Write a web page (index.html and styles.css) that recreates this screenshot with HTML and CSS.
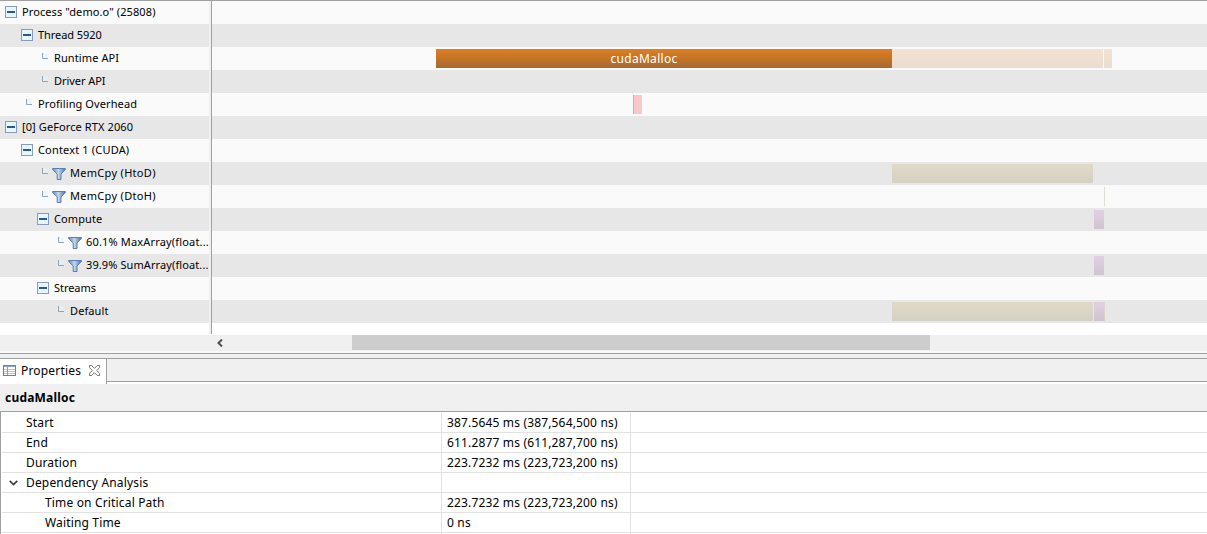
FILE: index.html
```html
<!DOCTYPE html>
<html lang="en">
<head>
<meta charset="utf-8">
<title>Profiler</title>
<link rel="stylesheet" href="styles.css">
</head>
<body>
<svg class="defs" aria-hidden="true">
  <defs>
    <linearGradient id="fg"><stop offset="0" stop-color="#5f89bd"/><stop offset=".45" stop-color="#c3d6ea"/><stop offset="1" stop-color="#4a70ac"/></linearGradient>
    <symbol id="minus" viewBox="0 0 12 12"><rect x=".5" y=".5" width="11" height="11" fill="#e6f6fd" stroke="#879cb8"/><path d="M2 6h8" stroke="#2f5597" stroke-width="2"/></symbol>
    <symbol id="elbow" viewBox="0 0 6 6"><path d="M1 0h5v5H1z" fill="#e6f4fa" opacity=".6"/><path d="M.5 0v5.5H6" fill="none" stroke="#8fa3ba"/></symbol>
    <symbol id="funnel" viewBox="0 0 14 12"><path d="M.6.5h12.8v1L9 6v5.5H5.2V6L.6 1.5z" fill="url(#fg)" stroke="#5b80b5"/></symbol>
  </defs>
</svg>
<main class="app">
  <section class="timeline">
    <div class="tree">
      <div class="item"><svg class="minus"><use href="#minus"/></svg><span>Process "demo.o" (25808)</span></div>
      <div class="item l1"><svg class="minus"><use href="#minus"/></svg><span class="tight">Thread 5920</span></div>
      <div class="item l2"><svg class="elbow"><use href="#elbow"/></svg><span>Runtime API</span></div>
      <div class="item l2"><svg class="elbow"><use href="#elbow"/></svg><span class="tight">Driver API</span></div>
      <div class="item l1"><svg class="elbow"><use href="#elbow"/></svg><span>Profiling Overhead</span></div>
      <div class="item"><svg class="minus"><use href="#minus"/></svg><span>[0] GeForce RTX 2060</span></div>
      <div class="item l1"><svg class="minus"><use href="#minus"/></svg><span class="loose">Context 1 (CUDA)</span></div>
      <div class="item l2"><svg class="elbow"><use href="#elbow"/></svg><svg class="funnel"><use href="#funnel"/></svg><span class="wide">MemCpy (HtoD)</span></div>
      <div class="item l2"><svg class="elbow"><use href="#elbow"/></svg><svg class="funnel"><use href="#funnel"/></svg><span class="wide">MemCpy (DtoH)</span></div>
      <div class="item l2"><svg class="minus"><use href="#minus"/></svg><span>Compute</span></div>
      <div class="item l3"><svg class="elbow"><use href="#elbow"/></svg><svg class="funnel"><use href="#funnel"/></svg><span class="loose">60.1% MaxArray(float...</span></div>
      <div class="item l3"><svg class="elbow"><use href="#elbow"/></svg><svg class="funnel"><use href="#funnel"/></svg><span>39.9% SumArray(float...</span></div>
      <div class="item l2"><svg class="minus"><use href="#minus"/></svg><span class="tight">Streams</span></div>
      <div class="item l3"><svg class="elbow"><use href="#elbow"/></svg><span>Default</span></div>
    </div>
    <div class="chart">
      <div class="lane"></div>
      <div class="lane"></div>
      <div class="lane"><i class="bar active" style="margin-left:224px;width:456px"><span>cudaMalloc</span></i><i class="bar api" style="width:211px"></i><i class="bar api" style="margin-left:1px;width:8px"></i></div>
      <div class="lane"></div>
      <div class="lane"><i class="bar overhead" style="margin-left:421px;width:9px"></i></div>
      <div class="lane"></div>
      <div class="lane"></div>
      <div class="lane"><i class="bar copy" style="margin-left:680px;width:201px"></i></div>
      <div class="lane"><i class="bar tick" style="margin-left:892px;width:1px"></i></div>
      <div class="lane"><i class="bar kernel" style="margin-left:882px;width:10px"></i></div>
      <div class="lane"></div>
      <div class="lane"><i class="bar kernel" style="margin-left:882px;width:10px"></i></div>
      <div class="lane"></div>
      <div class="lane"><i class="bar copy" style="margin-left:680px;width:201px"></i><i class="bar kernel" style="margin-left:1px;width:10px"></i><i class="bar copy" style="width:1px"></i></div>
    </div>
  </section>
  <div class="scrollbar">
    <svg class="arrow" viewBox="0 0 6 8"><path d="M5 .5L1.5 4 5 7.5" fill="none" stroke="#505050" stroke-width="2"/></svg>
    <div class="thumb"></div>
  </div>
  <div class="sash"></div>
  <div class="tabs">
    <div class="tab">
      <svg class="table-icon" viewBox="0 0 13 11"><rect x=".5" y=".5" width="12" height="10" fill="#fff" stroke="#6e80a5"/><path d="M1 1.5h11" stroke="#8fa4c8" /><path d="M1 4.5h11M1 6.5h11M1 8.5h11" stroke="#b4c1d6"/><path d="M4.5 2v8" stroke="#8e9fbd"/></svg>
      <span>Properties</span>
      <svg class="close" viewBox="0 0 11 11"><path d="M.5.5h2.2l2.8 2.8L8.3.5h2.2v2.2L7.7 5.5l2.8 2.8v2.2H8.3L5.5 7.7l-2.8 2.8H.5V8.3l2.8-2.8L.5 2.7z" fill="#fff" stroke="#666" stroke-width=".9"/></svg>
    </div>
    <div class="tab-rest"></div>
  </div>
  <h1 class="title"><span>cudaMalloc</span></h1>
  <div class="props">
    <div class="prop"><div class="name"><span>Start</span></div><div class="value"><span>387.5645 ms (387,564,500 ns)</span></div></div>
    <div class="prop"><div class="name"><span>End</span></div><div class="value"><span>611.2877 ms (611,287,700 ns)</span></div></div>
    <div class="prop"><div class="name"><span>Duration</span></div><div class="value"><span>223.7232 ms (223,723,200 ns)</span></div></div>
    <div class="prop"><div class="name group"><svg class="chevron" viewBox="0 0 9 6"><path d="M.7.8L4.5 4.6 8.3.8" fill="none" stroke="#444" stroke-width="1.8"/></svg><span>Dependency Analysis</span></div><div class="value"></div></div>
    <div class="prop"><div class="name child"><span>Time on Critical Path</span></div><div class="value"><span>223.7232 ms (223,723,200 ns)</span></div></div>
    <div class="prop"><div class="name child"><span>Waiting Time</span></div><div class="value"><span>0 ns</span></div></div>
    <div class="prop"><div class="name"></div><div class="value"></div></div>
  </div>
</main>
</body>
</html>
```
FILE: styles.css
```css
* { box-sizing: border-box; }
body { margin: 0; overflow: hidden; background: #fff; color: #000; font: 12px/20px "Noto Sans", "Open Sans", sans-serif; }
svg { display: block; flex: none; }
.defs { position: absolute; width: 0; height: 0; }
.app { display: flex; flex-direction: column; width: 1207px; height: 534px; overflow: hidden; }

.timeline { display: flex; height: 334px; border-top: 1px solid #a0a0a0; flex: none; }
.tree { width: 211px; border-right: 2px solid #f0f0f0; font-size: 11px; line-height: 21px; letter-spacing: .1px; white-space: nowrap; }
.item { display: flex; align-items: center; height: 23px; padding: 0 0 1px 5px; background: #fafafa; }
.item:nth-child(even), .lane:nth-child(even) { background: #e7e7e7; }
.item.l1 { padding-left: 21px; }
.item.l2 { padding-left: 37px; }
.item.l3 { padding-left: 53px; }
.item span { height: 22px; }
.tight { letter-spacing: -.06px; }
.loose { letter-spacing: .17px; }
.wide { letter-spacing: .3px; }
.minus { width: 12px; height: 12px; margin-right: 5px; }
.elbow { width: 6px; height: 6px; margin: 0 6px 4px 5px; }
.funnel { width: 14px; height: 12px; margin: 1px 4px 0 -2px; }
.chart { flex: 1; border-left: 1px solid #a0a0a0; }
.lane { display: flex; height: 23px; padding-top: 2px; background: #fafafa; }
.bar { display: block; flex: none; height: 19px; font-style: normal; }
.active { background: linear-gradient(#e07e20, #a66a30); color: #fff; text-align: center; line-height: 19px; padding-right: 40px; letter-spacing: .3px; }
.api { background: linear-gradient(#f5e2d0, #e9ddd1); }
.overhead { background: linear-gradient(#fbc6c8, #f3caca); border-left: 1px solid #eda0a2; }
.copy { background: linear-gradient(#e1dac8, #d4d0c2); }
.tick { background: #dfe0cc; }
.kernel { background: linear-gradient(#e3cfe4, #cfc4d0); }

.scrollbar { display: flex; flex: none; align-items: flex-start; height: 17px; background: #f0f0f0; border-top: 1px solid #fff; padding-left: 217px; }
.arrow { width: 6px; height: 8px; margin-top: 4px; }
.thumb { width: 578px; height: 15px; margin-left: 129px; background: #cdcdcd; }
.sash { flex: none; height: 8px; background: #f0f0f0; border-top: 2px solid #fafafa; border-bottom: 1px solid #a0a0a0; box-shadow: inset 0 1px #a0a0a0; }
.tabs { display: flex; flex: none; height: 25px; }
.tab { display: flex; align-items: center; width: 107px; padding: 0 0 1px 3px; background: #fff; border-right: 1px solid #a0a0a0; letter-spacing: .18px; }
.table-icon { width: 13px; height: 11px; margin: 0 5px 2px 0; }
.close { width: 11px; height: 11px; margin: 0 0 2px 8px; }
.tab-rest { flex: 1; height: 23px; background: #f0f0f0; border-bottom: 1px solid #a0a0a0; }
.title { flex: none; height: 28px; margin: 0; padding-left: 5px; background: #f0f0f0; border-bottom: 1px solid #a0a0a0; font-size: 12px; line-height: 27px; letter-spacing: .2px; }
.props { flex: 1; border-left: 1px solid #a0a0a0; padding: 1px 0 0 1px; letter-spacing: .16px; }
.prop { display: flex; height: 20px; border-bottom: 1px solid #e2e2e2; }
.name { display: flex; width: 440px; padding-left: 24px; border-right: 1px solid #e2e2e2; }
.value { width: 189px; padding-left: 5px; border-right: 1px solid #e2e2e2; white-space: nowrap; }
.group { align-items: center; padding-left: 7px; }
.chevron { width: 9px; height: 6px; margin-right: 8px; }
.child { padding-left: 43px; }
```
